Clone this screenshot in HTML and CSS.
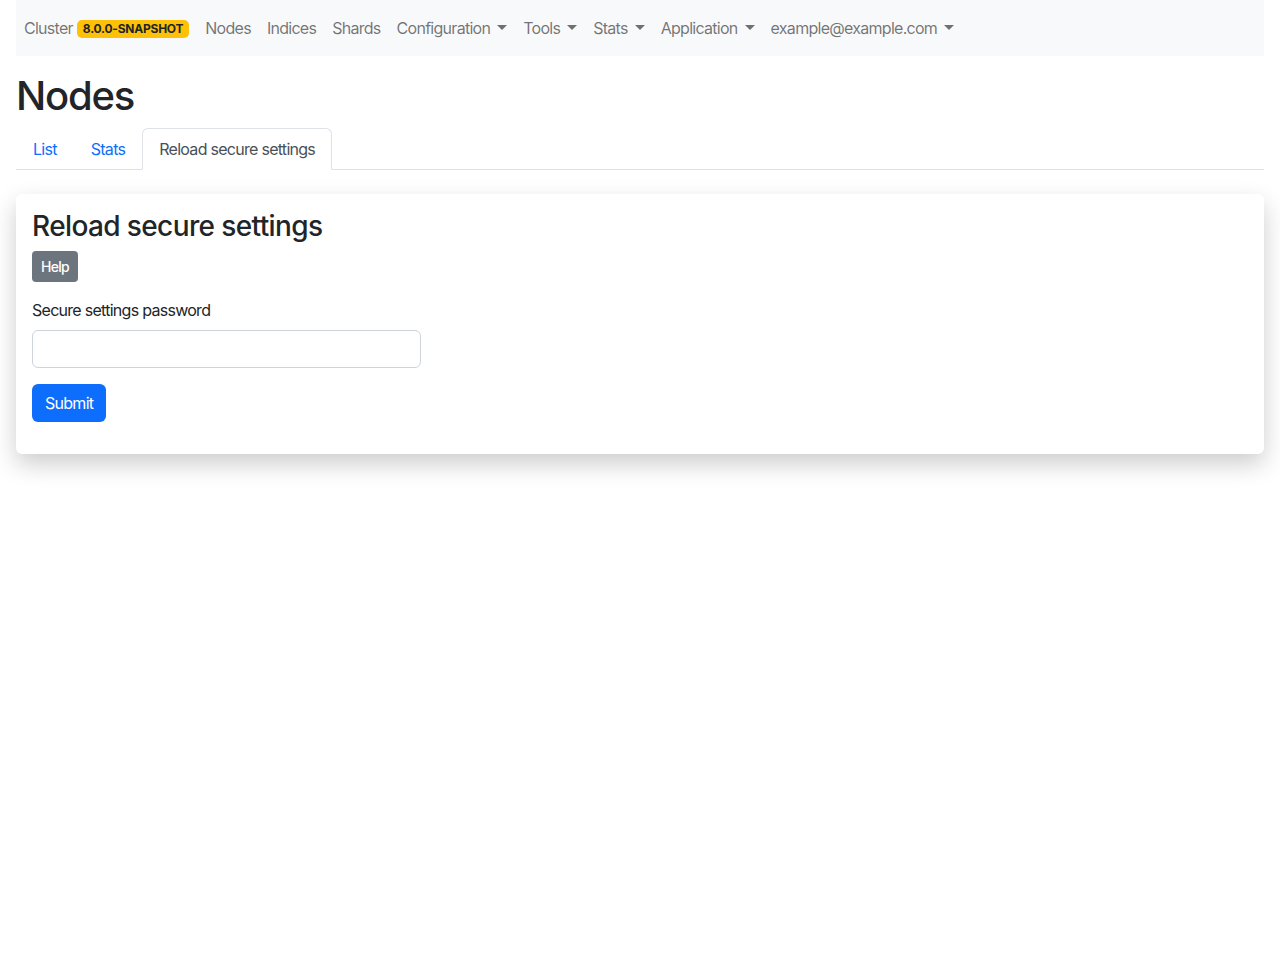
FILE: index.html
```html
<!DOCTYPE html>
<html lang="en">
<head>
<meta charset="utf-8">
<title>Nodes</title>
<link rel="stylesheet" href="styles.css">
</head>
<body>
<div class="page">
  <nav class="navbar">
    <a class="brand" href="#">Cluster <span class="badge">8.0.0-SNAPSHOT</span></a>
    <ul class="nav-main">
      <li><a href="#">Nodes</a></li>
      <li><a href="#">Indices</a></li>
      <li><a href="#">Shards</a></li>
      <li><a href="#" class="dropdown">Configuration</a></li>
      <li><a href="#" class="dropdown">Tools</a></li>
      <li><a href="#" class="dropdown">Stats</a></li>
      <li><a href="#" class="dropdown">Application</a></li>
      <li><a href="#" class="dropdown">example@example.com</a></li>
    </ul>
  </nav>

  <h1 class="title">Nodes</h1>
  <ul class="tabs">
    <li><a href="#" class="tab">List</a></li>
    <li><a href="#" class="tab">Stats</a></li>
    <li><a href="#" class="tab active">Reload secure settings</a></li>
  </ul>

  <div class="card">
    <h3 class="card-title">Reload secure settings</h3>
    <button class="btn btn-help" type="button">Help</button>
    <form class="form">
      <div class="row">
        <div class="col">
          <label class="label" for="pw">Secure settings password</label>
          <input class="input" id="pw" type="password">
        </div>
      </div>
      <button class="btn btn-primary" type="button">Submit</button>
    </form>
  </div>
</div>
</body>
</html>
```

FILE: styles.css
```css
* { box-sizing: border-box; }
html, body { margin: 0; padding: 0; }
html { min-height: 100%; background: #fff; }
body {
  font-family: Inter, "Liberation Sans", sans-serif;
  font-size: 16px;
  line-height: 1.5;
  letter-spacing: -0.045em;
  color: #212529;
  background: #fff;
  min-height: 960px;
}
a { text-decoration: none; }
ul { list-style: none; margin: 0; padding: 0; }

.page { padding: 0 16px 48px; }

.navbar {
  display: flex;
  align-items: center;
  background: #f8f9fa;
  height: 56px;
  padding: 8px 8px;
}
.brand {
  color: rgba(0, 0, 0, 0.55);
  font-size: 16px;
  display: flex;
  align-items: center;
  gap: 4px;
  margin-right: 8px;
}
.badge {
  background: #ffc107;
  color: #212529;
  font-size: 12px;
  font-weight: 700;
  letter-spacing: -0.02em;
  line-height: 1;
  padding: 3px 6px;
  border-radius: 5px;
  margin-top: 2px;
}
.nav-main { display: flex; }
.nav-main a {
  display: flex;
  align-items: center;
  padding: 8px 8px;
  color: rgba(0, 0, 0, 0.55);
  line-height: 24px;
}
.dropdown::after {
  content: "";
  display: inline-block;
  margin-left: 7px;
  border-top: 5px solid currentColor;
  border-left: 5px solid transparent;
  border-right: 5px solid transparent;
  margin-top: -1px;
}

.title {
  font-size: 40px;
  font-weight: 500;
  letter-spacing: -0.03em;
  line-height: 48px;
  margin: 16px 0 8px;
}

.tabs {
  display: flex;
  border-bottom: 1px solid #dee2e6;
}
.tab {
  display: block;
  padding: 8px 16px;
  border: 1px solid transparent;
  border-top-left-radius: 6px;
  border-top-right-radius: 6px;
  margin-bottom: -1px;
  color: #0d6efd;
  line-height: 24px;
}
.tab.active {
  color: #495057;
  background: #fff;
  border-color: #dee2e6 #dee2e6 #fff;
}

.card {
  margin-top: 24px;
  background: #fff;
  border-radius: 6px;
  box-shadow: 0 10px 24px rgba(0, 0, 0, 0.2);
  padding: 16px 16px 32px;
}
.card-title {
  font-size: 28px;
  font-weight: 500;
  letter-spacing: -0.022em;
  line-height: 33px;
  margin: 0 0 8px;
}
.btn {
  font-family: inherit;
  letter-spacing: inherit;
  display: inline-block;
  border: 1px solid transparent;
  cursor: pointer;
}
.btn-help {
  background: #6c757d;
  color: #fff;
  font-size: 14px;
  font-weight: 500;
  letter-spacing: -0.05em;
  line-height: 21px;
  padding: 4px 8px;
  border-radius: 4px;
}
.form { margin-top: 16px; }
.row { display: grid; grid-template-columns: repeat(3, 1fr); column-gap: 24px; }
.label { display: block; margin-bottom: 8px; }
.input {
  display: block;
  width: 100%;
  height: 38px;
  border: 1px solid #ced4da;
  border-radius: 6px;
  padding: 6px 12px;
  font-size: 16px;
  font-family: inherit;
  margin-bottom: 16px;
}
.btn-primary {
  background: #0d6efd;
  color: #fff;
  font-size: 16px;
  line-height: 24px;
  padding: 6px 12px;
  border-radius: 6px;
}
```
